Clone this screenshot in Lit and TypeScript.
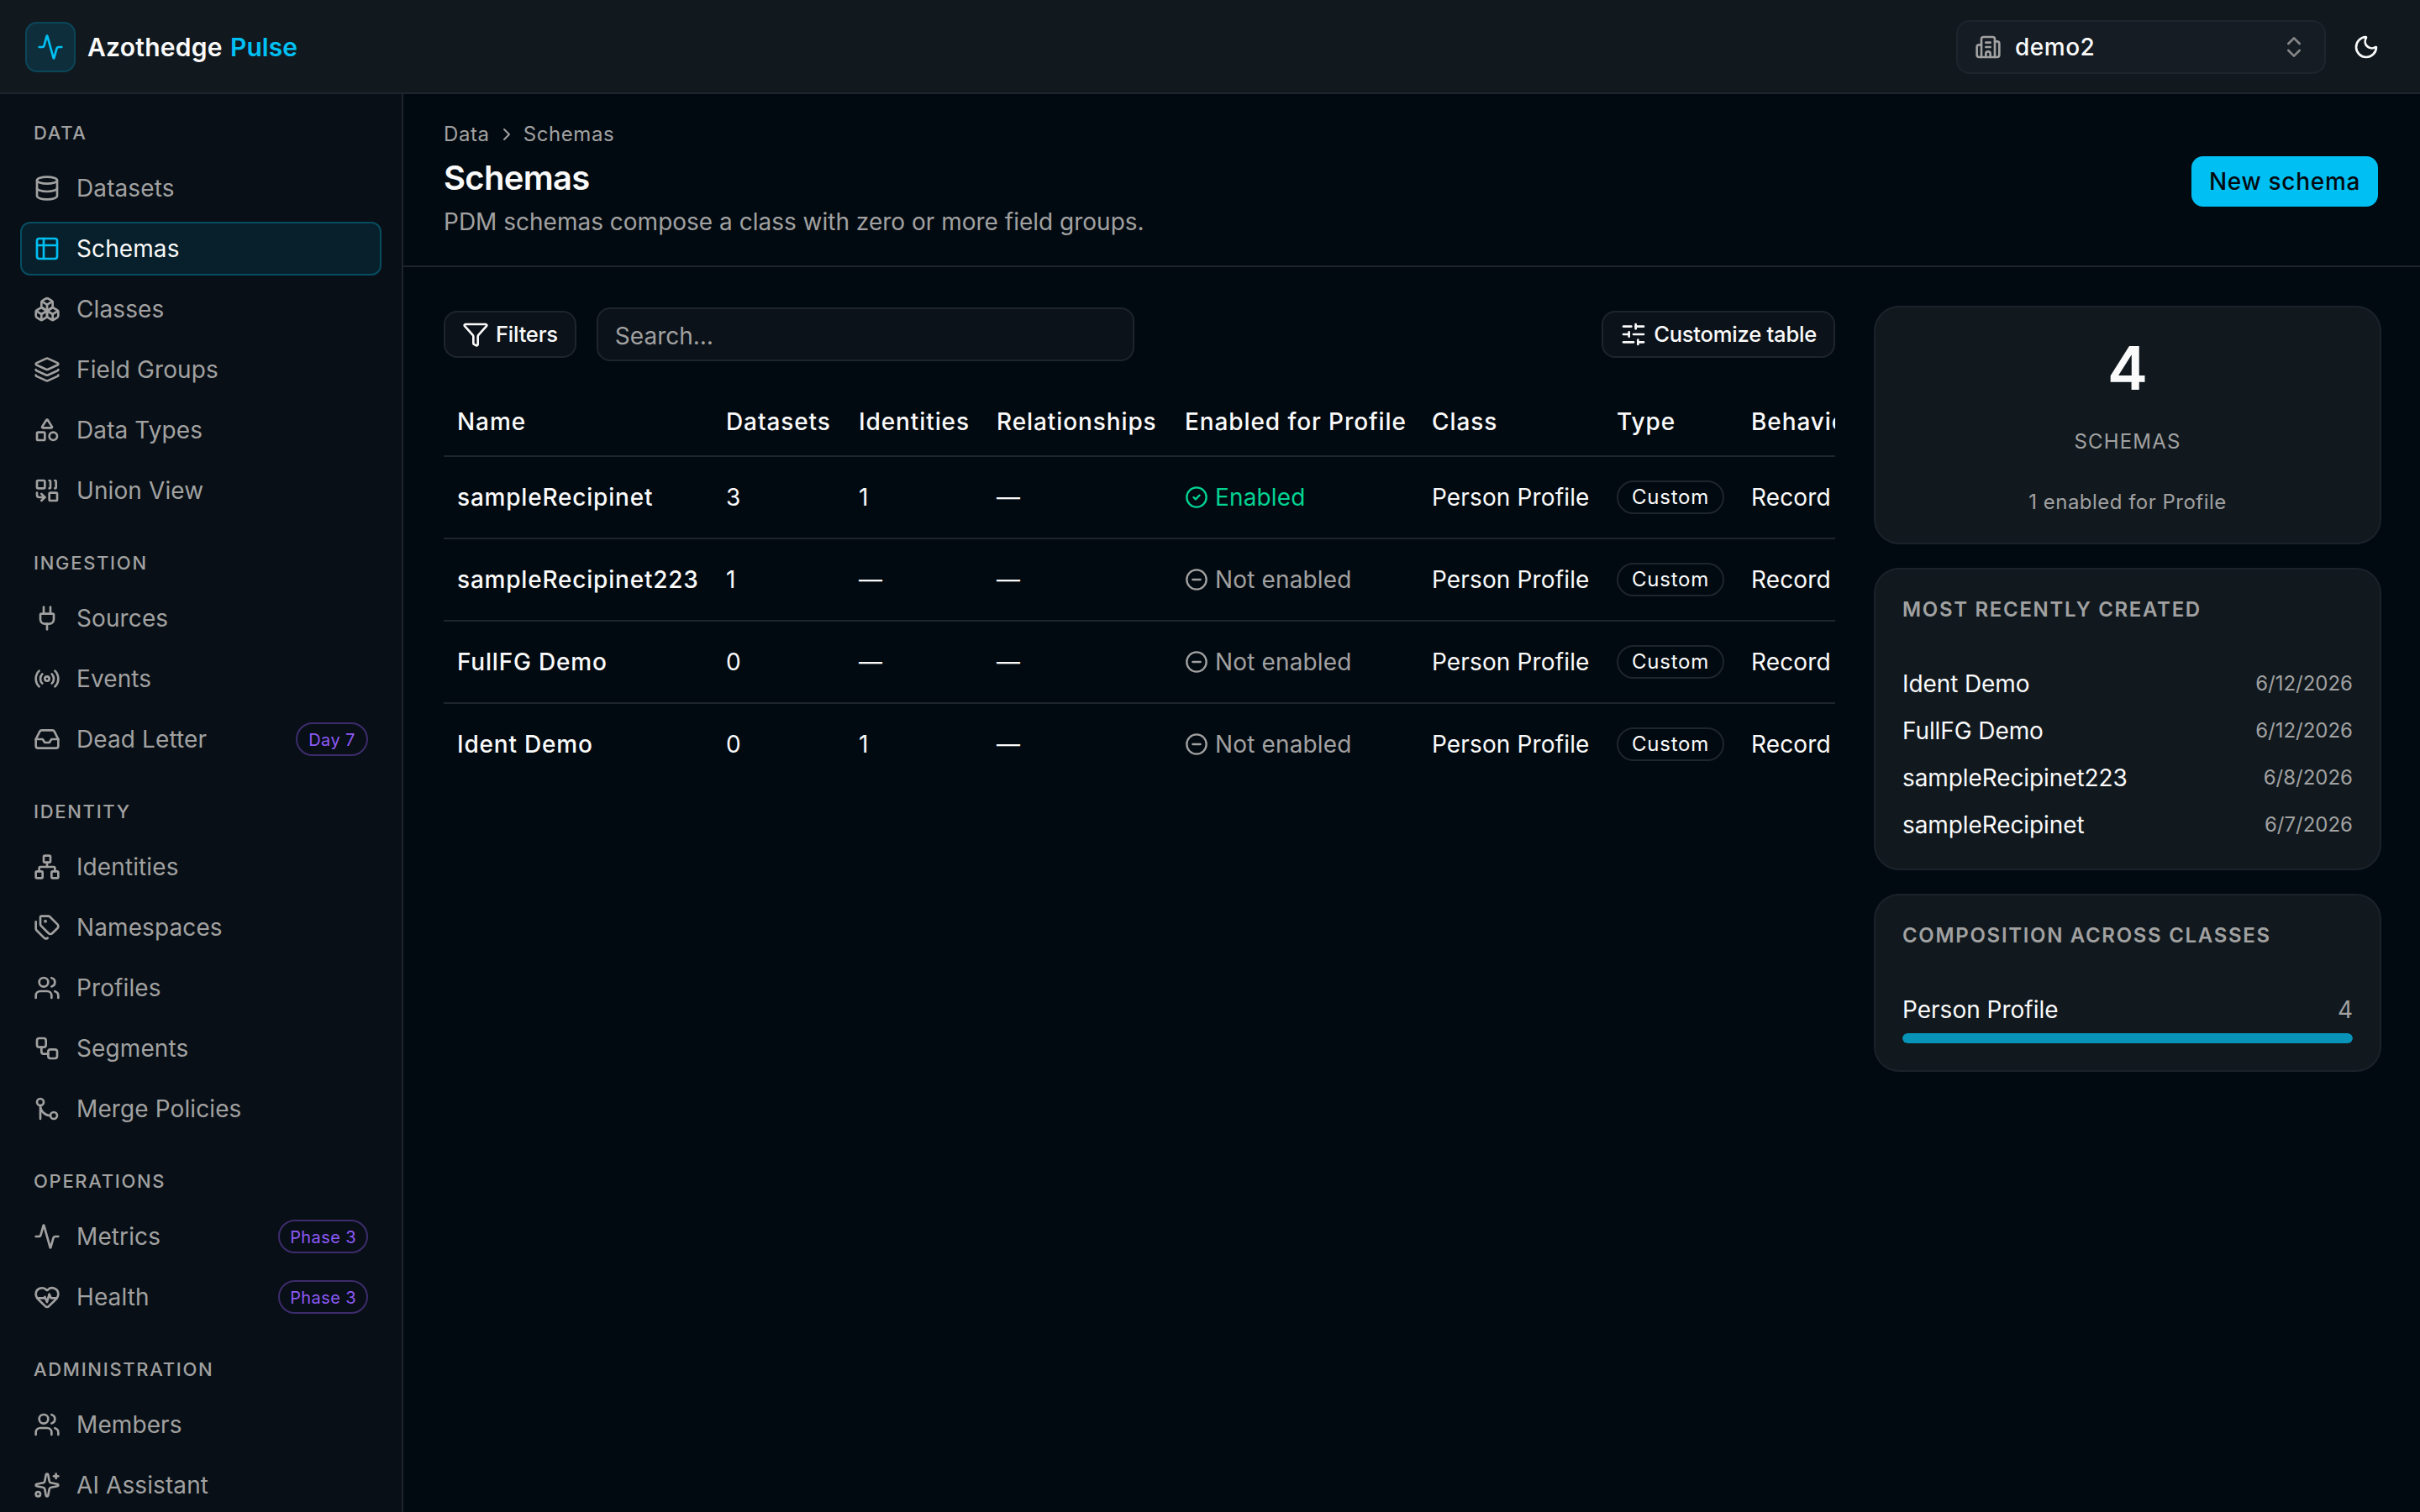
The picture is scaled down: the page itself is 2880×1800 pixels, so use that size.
import { LitElement, html, css, svg } from 'lit';
import { customElement, property } from 'lit/decorators.js';
import { classMap } from 'lit/directives/class-map.js';

const icons: Record<string, any> = {
  activity: svg`<path d="M22 12h-2.48a2 2 0 0 0-1.93 1.46l-2.35 8.36a.25.25 0 0 1-.48 0L9.24 2.18a.25.25 0 0 0-.48 0l-2.35 8.36A2 2 0 0 1 4.49 12H2"/>`,
  building: svg`<path d="M10 12h4"/><path d="M10 8h4"/><path d="M14 21v-3a2 2 0 0 0-4 0v3"/><path d="M6 10H4a2 2 0 0 0-2 2v7a2 2 0 0 0 2 2h16a2 2 0 0 0 2-2V9a2 2 0 0 0-2-2h-2"/><path d="M6 21V5a2 2 0 0 1 2-2h8a2 2 0 0 1 2 2v16"/>`,
  chevrons: svg`<path d="m7 15 5 5 5-5"/><path d="m7 9 5-5 5 5"/>`,
  chevronRight: svg`<path d="m9 18 6-6-6-6"/>`,
  moon: svg`<path d="M20.985 12.486a9 9 0 1 1-9.473-9.472c.405-.022.617.46.402.803a6 6 0 0 0 8.268 8.268c.344-.215.825-.004.803.401"/>`,
  database: svg`<ellipse cx="12" cy="5" rx="9" ry="3"/><path d="M3 5V19A9 3 0 0 0 21 19V5"/><path d="M3 12A9 3 0 0 0 21 12"/>`,
  table: svg`<rect width="18" height="18" x="3" y="3" rx="2"/><path d="M3 9h18"/><path d="M9 3v18"/>`,
  boxes: svg`<path d="M2.97 12.92A2 2 0 0 0 2 14.63v3.24a2 2 0 0 0 .97 1.71l3 1.8a2 2 0 0 0 2.06 0L12 19v-5.5l-5-3-4.03 2.42Z"/><path d="m7 16.5-4.74-2.85"/><path d="m7 16.5 5-3"/><path d="M7 16.5v5.17"/><path d="M12 13.5V19l3.97 2.38a2 2 0 0 0 2.06 0l3-1.8a2 2 0 0 0 .97-1.71v-3.24a2 2 0 0 0-.97-1.71L17 10.5l-5 3Z"/><path d="m17 16.5-5-3"/><path d="m17 16.5 4.74-2.85"/><path d="M17 16.5v5.17"/><path d="M7.97 4.42A2 2 0 0 0 7 6.13v4.37l5 3 5-3V6.13a2 2 0 0 0-.97-1.71l-3-1.8a2 2 0 0 0-2.06 0l-3 1.8Z"/><path d="M12 8 7.26 5.15"/><path d="m12 8 4.74-2.85"/><path d="M12 13.5V8"/>`,
  layers: svg`<path d="M12.83 2.18a2 2 0 0 0-1.66 0L2.6 6.08a1 1 0 0 0 0 1.83l8.58 3.91a2 2 0 0 0 1.66 0l8.58-3.9a1 1 0 0 0 0-1.83z"/><path d="M2 12a1 1 0 0 0 .58.91l8.6 3.91a2 2 0 0 0 1.65 0l8.58-3.9A1 1 0 0 0 22 12"/><path d="M2 17a1 1 0 0 0 .58.91l8.6 3.91a2 2 0 0 0 1.65 0l8.58-3.9A1 1 0 0 0 22 17"/>`,
  shapes: svg`<path d="M8.3 10a.7.7 0 0 1-.626-1.079L11.4 3a.7.7 0 0 1 1.198-.043L16.3 8.9a.7.7 0 0 1-.572 1.1Z"/><rect x="3" y="14" width="7" height="7" rx="1"/><circle cx="17.5" cy="17.5" r="3.5"/>`,
  combine: svg`<path d="M14 3a1 1 0 0 1 1 1v5a1 1 0 0 1-1 1"/><path d="M19 3a1 1 0 0 1 1 1v5a1 1 0 0 1-1 1"/><path d="m7 15 3 3"/><path d="m7 21 3-3H5a2 2 0 0 1-2-2v-2"/><rect x="14" y="14" width="7" height="7" rx="1"/><rect x="3" y="3" width="7" height="7" rx="1"/>`,
  plug: svg`<path d="M12 22v-5"/><path d="M15 8V2"/><path d="M17 8a1 1 0 0 1 1 1v4a4 4 0 0 1-4 4h-4a4 4 0 0 1-4-4V9a1 1 0 0 1 1-1z"/><path d="M9 8V2"/>`,
  radio: svg`<path d="M16.247 7.761a6 6 0 0 1 0 8.478"/><path d="M19.075 4.933a10 10 0 0 1 0 14.134"/><path d="M4.925 19.067a10 10 0 0 1 0-14.134"/><path d="M7.753 16.239a6 6 0 0 1 0-8.478"/><circle cx="12" cy="12" r="2"/>`,
  inbox: svg`<polyline points="22 12 16 12 14 15 10 15 8 12 2 12"/><path d="M5.45 5.11 2 12v6a2 2 0 0 0 2 2h16a2 2 0 0 0 2-2v-6l-3.45-6.89A2 2 0 0 0 16.76 4H7.24a2 2 0 0 0-1.79 1.11z"/>`,
  network: svg`<rect x="16" y="16" width="6" height="6" rx="1"/><rect x="2" y="16" width="6" height="6" rx="1"/><rect x="9" y="2" width="6" height="6" rx="1"/><path d="M5 16v-3a1 1 0 0 1 1-1h12a1 1 0 0 1 1 1v3"/><path d="M12 12V8"/>`,
  tags: svg`<path d="M13.172 2a2 2 0 0 1 1.414.586l6.71 6.71a2.4 2.4 0 0 1 0 3.408l-4.592 4.592a2.4 2.4 0 0 1-3.408 0l-6.71-6.71A2 2 0 0 1 6 9.172V3a1 1 0 0 1 1-1z"/><path d="M2 7v6.172a2 2 0 0 0 .586 1.414l6.71 6.71a2.4 2.4 0 0 0 3.191.193"/><circle cx="10.5" cy="6.5" r=".5" fill="currentColor"/>`,
  users: svg`<path d="M16 21v-2a4 4 0 0 0-4-4H6a4 4 0 0 0-4 4v2"/><path d="M16 3.128a4 4 0 0 1 0 7.744"/><path d="M22 21v-2a4 4 0 0 0-3-3.87"/><circle cx="9" cy="7" r="4"/>`,
  workflow: svg`<rect width="8" height="8" x="3" y="3" rx="2"/><path d="M7 11v4a2 2 0 0 0 2 2h4"/><rect width="8" height="8" x="13" y="13" rx="2"/>`,
  merge: svg`<circle cx="18" cy="18" r="3"/><circle cx="6" cy="6" r="3"/><path d="M6 21V9a9 9 0 0 0 9 9"/>`,
  heart: svg`<path d="M2 9.5a5.5 5.5 0 0 1 9.591-3.676.56.56 0 0 0 .818 0A5.49 5.49 0 0 1 22 9.5c0 2.29-1.5 4-3 5.5l-5.492 5.313a2 2 0 0 1-3 .019L5 15c-1.5-1.5-3-3.2-3-5.5"/><path d="M3.22 13H9.5l.5-1 2 4.5 2-7 1.5 3.5h5.27"/>`,
  sparkles: svg`<path d="M11.017 2.814a1 1 0 0 1 1.966 0l1.051 5.558a2 2 0 0 0 1.594 1.594l5.558 1.051a1 1 0 0 1 0 1.966l-5.558 1.051a2 2 0 0 0-1.594 1.594l-1.051 5.558a1 1 0 0 1-1.966 0l-1.051-5.558a2 2 0 0 0-1.594-1.594l-5.558-1.051a1 1 0 0 1 0-1.966l5.558-1.051a2 2 0 0 0 1.594-1.594z"/><path d="M20 2v4"/><path d="M22 4h-4"/><circle cx="4" cy="20" r="2"/>`,
  funnel: svg`<path d="M10 20a1 1 0 0 0 .553.895l2 1A1 1 0 0 0 14 21v-7a2 2 0 0 1 .517-1.341L21.74 4.67A1 1 0 0 0 21 3H3a1 1 0 0 0-.742 1.67l7.225 7.989A2 2 0 0 1 10 14z"/>`,
  sliders: svg`<path d="M10 5H3"/><path d="M12 19H3"/><path d="M14 3v4"/><path d="M16 17v4"/><path d="M21 12h-9"/><path d="M21 19h-5"/><path d="M21 5h-7"/><path d="M8 10v4"/><path d="M8 12H3"/>`,
  check: svg`<circle cx="12" cy="12" r="10"/><path d="m9 12 2 2 4-4"/>`,
  minus: svg`<circle cx="12" cy="12" r="10"/><path d="M8 12h8"/>`,
};

@customElement('ui-icon')
export class UiIcon extends LitElement {
  static styles = css`
    :host {
      display: block;
      flex: none;
      width: 16px;
      height: 16px;
    }

    svg {
      display: block;
      width: 100%;
      height: 100%;
      fill: none;
      stroke: currentColor;
      stroke-width: 2;
      stroke-linecap: round;
      stroke-linejoin: round;
    }
  `;

  @property() name = '';

  render() {
    return html`<svg viewBox="0 0 24 24">${icons[this.name]}</svg>`;
  }
}

const menu = [
  {
    label: 'Data',
    items: [
      { icon: 'database', text: 'Datasets' },
      { icon: 'table', text: 'Schemas', active: true },
      { icon: 'boxes', text: 'Classes' },
      { icon: 'layers', text: 'Field Groups' },
      { icon: 'shapes', text: 'Data Types' },
      { icon: 'combine', text: 'Union View' },
    ],
  },
  {
    label: 'Ingestion',
    items: [
      { icon: 'plug', text: 'Sources' },
      { icon: 'radio', text: 'Events' },
      { icon: 'inbox', text: 'Dead Letter', badge: 'Day 7' },
    ],
  },
  {
    label: 'Identity',
    items: [
      { icon: 'network', text: 'Identities' },
      { icon: 'tags', text: 'Namespaces' },
      { icon: 'users', text: 'Profiles' },
      { icon: 'workflow', text: 'Segments' },
      { icon: 'merge', text: 'Merge Policies' },
    ],
  },
  {
    label: 'Operations',
    items: [
      { icon: 'activity', text: 'Metrics', badge: 'Phase 3' },
      { icon: 'heart', text: 'Health', badge: 'Phase 3' },
    ],
  },
  {
    label: 'Administration',
    items: [
      { icon: 'users', text: 'Members' },
      { icon: 'sparkles', text: 'AI Assistant' },
    ],
  },
];

@customElement('side-nav')
export class SideNav extends LitElement {
  static styles = css`
    :host {
      display: block;
      box-sizing: border-box;
      width: 240px;
      padding: 14px 12px 0;
      overflow: hidden;
      background: #080f16;
      border-right: 1px solid #1e252d;
      color: #a1a1a1;
    }

    .group {
      margin-bottom: 18px;
    }

    .label {
      height: 18px;
      margin-bottom: 8px;
      padding: 0 8px;
      font-size: 11px;
      line-height: 18px;
      font-weight: 500;
      letter-spacing: 0.85px;
      text-transform: uppercase;
    }

    .items {
      display: flex;
      flex-direction: column;
      gap: 4px;
    }

    .item {
      display: flex;
      align-items: center;
      gap: 9.5px;
      box-sizing: border-box;
      height: 32px;
      padding: 0 7px;
      border: 1px solid transparent;
      border-radius: 6px;
      font-size: 14px;
      line-height: 20px;
      letter-spacing: 0.05px;
    }

    .text {
      flex: 1;
    }

    .item.active {
      color: #fafafa;
      background: #08202b;
      border-color: #064d61;
    }

    .item.active ui-icon {
      color: #00c0f3;
    }

    .badge {
      box-sizing: border-box;
      min-width: 43px;
      height: 20px;
      padding: 0 6px;
      border: 1px solid #3d2c6d;
      border-radius: 10px;
      text-align: center;
      font-size: 10px;
      line-height: 19px;
      letter-spacing: 0.2px;
      color: #8e59f7;
    }
  `;

  render() {
    return menu.map(
      (group) => html`
        <div class="group">
          <div class="label">${group.label}</div>
          <div class="items">
            ${group.items.map(
              (item: any) => html`
                <div class=${classMap({ item: true, active: !!item.active })}>
                  <ui-icon name=${item.icon}></ui-icon>
                  <span class="text">${item.text}</span>
                  ${item.badge ? html`<span class="badge">${item.badge}</span>` : ''}
                </div>
              `
            )}
          </div>
        </div>
      `
    );
  }
}

const columns = [
  { title: 'Name', width: 160 },
  { title: 'Datasets', width: 79 },
  { title: 'Identities', width: 82 },
  { title: 'Relationships', width: 112 },
  { title: 'Enabled for Profile', width: 147 },
  { title: 'Class', width: 110 },
  { title: 'Type', width: 80 },
  { title: 'Behavior', width: 79 },
];

const schemas = [
  { name: 'sampleRecipinet', datasets: '3', identities: '1', relationships: '—', enabled: true },
  { name: 'sampleRecipinet223', datasets: '1', identities: '—', relationships: '—', enabled: false },
  { name: 'FullFG Demo', datasets: '0', identities: '—', relationships: '—', enabled: false },
  { name: 'Ident Demo', datasets: '0', identities: '1', relationships: '—', enabled: false },
];

@customElement('schema-table')
export class SchemaTable extends LitElement {
  // the table is wider than its column, the last cells run out of view
  static styles = css`
    :host {
      display: block;
      overflow: hidden;
    }

    table {
      table-layout: fixed;
      width: 849px;
      border-collapse: collapse;
      font-size: 14px;
      line-height: 20px;
      letter-spacing: 0.07px;
      white-space: nowrap;
    }

    th {
      height: 40px;
      padding: 0 8px;
      text-align: left;
      font-weight: 500;
      letter-spacing: 0.45px;
    }

    td {
      height: 48px;
      padding: 0 8px;
    }

    tr {
      border-bottom: 1px solid #1e252d;
    }

    tbody tr:last-child {
      border-bottom: none;
    }

    .name {
      font-weight: 500;
      letter-spacing: 0.4px;
    }

    .status {
      display: flex;
      align-items: center;
      gap: 4px;
      color: #a1a1a1;
    }

    .status.enabled {
      color: #00d492;
    }

    .status ui-icon {
      width: 14px;
      height: 14px;
    }

    .badge {
      display: block;
      box-sizing: border-box;
      width: 64px;
      height: 20px;
      border: 1px solid #1e252d;
      border-radius: 10px;
      text-align: center;
      font-size: 12px;
      line-height: 18px;
      letter-spacing: 0.4px;
    }
  `;

  render() {
    return html`
      <table>
        <colgroup>
          ${columns.map((c) => html`<col style="width:${c.width}px" />`)}
        </colgroup>
        <thead>
          <tr>${columns.map((c) => html`<th>${c.title}</th>`)}</tr>
        </thead>
        <tbody>
          ${schemas.map(
            (s) => html`
              <tr>
                <td class="name">${s.name}</td>
                <td>${s.datasets}</td>
                <td>${s.identities}</td>
                <td>${s.relationships}</td>
                <td>
                  <div class=${classMap({ status: true, enabled: s.enabled })}>
                    <ui-icon name=${s.enabled ? 'check' : 'minus'}></ui-icon>
                    <span>${s.enabled ? 'Enabled' : 'Not enabled'}</span>
                  </div>
                </td>
                <td>Person Profile</td>
                <td><span class="badge">Custom</span></td>
                <td>Record</td>
              </tr>
            `
          )}
        </tbody>
      </table>
    `;
  }
}

const recent = [
  { name: 'Ident Demo', date: '6/12/2026' },
  { name: 'FullFG Demo', date: '6/12/2026' },
  { name: 'sampleRecipinet223', date: '6/8/2026' },
  { name: 'sampleRecipinet', date: '6/7/2026' },
];

const classes = [{ name: 'Person Profile', count: 4 }];

@customElement('schema-stats')
export class SchemaStats extends LitElement {
  static styles = css`
    :host {
      display: flex;
      flex-direction: column;
      gap: 16px;
      width: 300px;
    }

    .card {
      padding: 16px;
      border-radius: 14px;
      background: #11191f;
      box-shadow: 0 0 0 1px #1b2229;
      font-size: 14px;
      line-height: 20px;
    }

    .total {
      text-align: center;
      font-size: 12px;
      line-height: 16px;
      color: #a1a1a1;
    }

    .number {
      font-size: 36px;
      line-height: 40px;
      font-weight: 600;
      color: #fafafa;
    }

    .caption {
      margin: 16px 0 20px;
      letter-spacing: 0.6px;
      text-transform: uppercase;
    }

    .note {
      letter-spacing: 0.24px;
    }

    .title {
      margin-bottom: 26px;
      font-size: 12px;
      line-height: 16px;
      font-weight: 600;
      letter-spacing: 0.84px;
      text-transform: uppercase;
      color: #a1a1a1;
    }

    .list {
      display: flex;
      flex-direction: column;
      gap: 8px;
    }

    .row {
      display: flex;
      align-items: center;
      justify-content: space-between;
    }

    .list .name {
      letter-spacing: -0.05px;
    }

    .date {
      font-size: 12px;
      line-height: 16px;
      color: #a1a1a1;
    }

    .count {
      color: #a1a1a1;
    }

    .track {
      height: 6px;
      margin-top: 4px;
      border-radius: 3px;
      background: #1b2229;
      overflow: hidden;
    }

    .bar {
      height: 100%;
      border-radius: 3px;
      background: #0794b8;
    }
  `;

  render() {
    const total = schemas.length;
    return html`
      <div class="card total">
        <div class="number">${total}</div>
        <div class="caption">Schemas</div>
        <div class="note">1 enabled for Profile</div>
      </div>
      <div class="card">
        <div class="title">Most recently created</div>
        <div class="list">
          ${recent.map(
            (r) => html`<div class="row"><span class="name">${r.name}</span><span class="date">${r.date}</span></div>`
          )}
        </div>
      </div>
      <div class="card">
        <div class="title">Composition across classes</div>
        ${classes.map(
          (c) => html`
            <div class="row"><span>${c.name}</span><span class="count">${c.count}</span></div>
            <div class="track"><div class="bar" style="width:${(c.count / total) * 100}%"></div></div>
          `
        )}
      </div>
    `;
  }
}

@customElement('app-root')
export class AppRoot extends LitElement {
  // laid out on a 1440x900 grid and drawn at twice that size
  static styles = css`
    :host {
      display: flex;
      flex-direction: column;
      width: 1440px;
      height: 900px;
      overflow: hidden;
      zoom: 2;
      background: #020a11;
      color: #fafafa;
      font-family: Inter, 'Liberation Sans', sans-serif;
      font-size: 14px;
      line-height: 20px;
    }

    .topbar {
      display: flex;
      align-items: center;
      justify-content: space-between;
      flex: none;
      box-sizing: border-box;
      height: 56px;
      padding: 1px 16px 0;
      background: #11191f;
      border-bottom: 1px solid #1e252d;
    }

    .brand {
      display: flex;
      align-items: center;
      gap: 7px;
      margin-left: -1px;
      font-size: 15px;
      font-weight: 600;
      letter-spacing: 0.12px;
    }

    .logo {
      display: grid;
      place-items: center;
      box-sizing: border-box;
      width: 30px;
      height: 30px;
      border: 1px solid #0b4658;
      border-radius: 7px;
      background: #0e2e3c;
      color: #00c0f3;
    }

    .brand em {
      margin-left: 0.8px;
      font-style: normal;
      letter-spacing: 0;
      color: #00c0f3;
    }

    .tools {
      display: flex;
      align-items: center;
      gap: 8px;
    }

    .select {
      display: flex;
      align-items: center;
      gap: 8px;
      box-sizing: border-box;
      width: 220px;
      height: 32px;
      padding: 0 10px;
      border: 1px solid #1e252d;
      border-radius: 8px;
      background: #151c23;
      font-weight: 500;
      letter-spacing: 0.25px;
    }

    .select span {
      flex: 1;
    }

    .select ui-icon {
      color: #a1a1a1;
    }

    .select .arrows {
      opacity: 0.8;
    }

    .theme {
      display: grid;
      place-items: center;
      width: 32px;
      height: 32px;
    }

    .body {
      display: flex;
      flex: 1;
      min-height: 0;
    }

    main {
      flex: 1;
      min-width: 0;
    }

    .head {
      display: flex;
      align-items: center;
      justify-content: space-between;
      box-sizing: border-box;
      height: 103px;
      padding: 16px 24px;
      border-bottom: 1px solid #1e252d;
    }

    .crumbs {
      display: flex;
      align-items: center;
      gap: 4px;
      font-size: 12px;
      line-height: 16px;
      letter-spacing: 0.3px;
      color: #a1a1a1;
    }

    .crumbs ui-icon {
      width: 12px;
      height: 12px;
    }

    h1 {
      margin: 4px 0 2px;
      font-size: 20px;
      line-height: 28px;
      font-weight: 600;
      letter-spacing: -0.35px;
    }

    .hint {
      color: #a1a1a1;
    }

    .primary {
      box-sizing: border-box;
      width: 111px;
      height: 30px;
      margin: 2px 1px 0 0;
      border-radius: 7px;
      background: #00c0f3;
      color: #020a11;
      text-align: center;
      font-weight: 500;
      line-height: 30px;
      letter-spacing: 0.35px;
    }

    .content {
      display: flex;
      align-items: flex-start;
      gap: 24px;
      padding: 24px;
    }

    .left {
      flex: 1;
      min-width: 0;
    }

    .toolbar {
      display: flex;
      align-items: center;
      gap: 12px;
      margin-bottom: 16px;
    }

    .button {
      display: flex;
      align-items: center;
      gap: 4px;
      box-sizing: border-box;
      height: 28px;
      padding: 0 10px;
      border: 1px solid #1e252d;
      border-radius: 8px;
      background: #0b1219;
      font-size: 12.8px;
      font-weight: 500;
      letter-spacing: -0.12px;
    }

    .search {
      box-sizing: border-box;
      width: 320px;
      height: 32px;
      padding: 0 10px;
      border: 1px solid #1e252d;
      border-radius: 8px;
      background: #0b1219;
      color: #a1a1a1;
      line-height: 32px;
    }

    .spacer {
      flex: 1;
    }
  `;

  render() {
    return html`
      <div class="topbar">
        <div class="brand">
          <div class="logo"><ui-icon name="activity"></ui-icon></div>
          <span>Azothedge <em>Pulse</em></span>
        </div>
        <div class="tools">
          <div class="select">
            <ui-icon name="building"></ui-icon>
            <span>demo2</span>
            <ui-icon class="arrows" name="chevrons"></ui-icon>
          </div>
          <div class="theme"><ui-icon name="moon"></ui-icon></div>
        </div>
      </div>
      <div class="body">
        <side-nav></side-nav>
        <main>
          <div class="head">
            <div>
              <div class="crumbs">
                <span>Data</span>
                <ui-icon name="chevronRight"></ui-icon>
                <span>Schemas</span>
              </div>
              <h1>Schemas</h1>
              <div class="hint">PDM schemas compose a class with zero or more field groups.</div>
            </div>
            <div class="primary">New schema</div>
          </div>
          <div class="content">
            <div class="left">
              <div class="toolbar">
                <div class="button"><ui-icon name="funnel"></ui-icon>Filters</div>
                <div class="search">Search…</div>
                <div class="spacer"></div>
                <div class="button"><ui-icon name="sliders"></ui-icon>Customize table</div>
              </div>
              <schema-table></schema-table>
            </div>
            <schema-stats></schema-stats>
          </div>
        </main>
      </div>
    `;
  }
}
